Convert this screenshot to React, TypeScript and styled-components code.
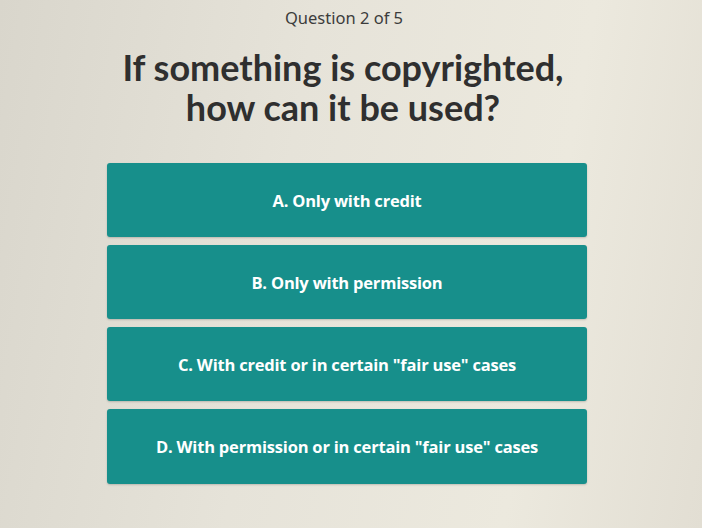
import React from "react";
import styled, { createGlobalStyle } from "styled-components";

const GlobalStyle = createGlobalStyle`
  html, body {
    margin: 0;
    padding: 0;
  }
  body {
    background: linear-gradient(100deg, #d9d6cc 0%, #e6e3d9 40%, #ece9de 75%, #e2ded3 100%);
    min-height: 528px;
  }
`;

const Page = styled.main`
  display: flex;
  flex-direction: column;
  align-items: center;
  width: 702px;
  height: 528px;
  padding: 8px 16px 0 0;
  box-sizing: border-box;
  font-family: "Open Sans", "Liberation Sans", sans-serif;
`;

const Counter = styled.div`
  font-family: "Noto Sans", "Liberation Sans", sans-serif;
  font-size: 16.5px;
  line-height: 20px;
  color: #3c3c3c;
  margin-left: 2px;
`;

const Title = styled.h1`
  margin: 19px 0 0;
  font-family: "Lato", "Liberation Sans", sans-serif;
  font-weight: 700;
  font-size: 36px;
  line-height: 40px;
  color: #2f2f2f;
  text-align: center;
`;

const Options = styled.div`
  display: flex;
  flex-direction: column;
  gap: 8px;
  width: 480px;
  margin-top: 36px;
  margin-left: 8px;
`;

const Option = styled.button<{ $h: number }>`
  display: flex;
  align-items: center;
  justify-content: center;
  height: ${(p) => p.$h}px;
  border: none;
  border-radius: 3px;
  background: #178f8b;
  color: #ffffff;
  font-family: "Open Sans", "Liberation Sans", sans-serif;
  font-weight: 700;
  font-size: 16.5px;
  letter-spacing: -0.2px;
  box-shadow: 0 1px 2px rgba(0, 0, 0, 0.18);
  cursor: pointer;
`;

const answers = [
  { text: "A. Only with credit", h: 74 },
  { text: "B. Only with permission", h: 74 },
  { text: "C. With credit or in certain \"fair use\" cases", h: 74 },
  { text: "D. With permission or in certain \"fair use\" cases", h: 75 },
];

export default function App() {
  return (
    <>
      <GlobalStyle />
      <Page>
        <Counter>Question 2 of 5</Counter>
        <Title>
          If something is copyrighted,
          <br />
          how can it be used?
        </Title>
        <Options>
          {answers.map((a) => (
            <Option key={a.text} $h={a.h}>
              {a.text}
            </Option>
          ))}
        </Options>
      </Page>
    </>
  );
}
